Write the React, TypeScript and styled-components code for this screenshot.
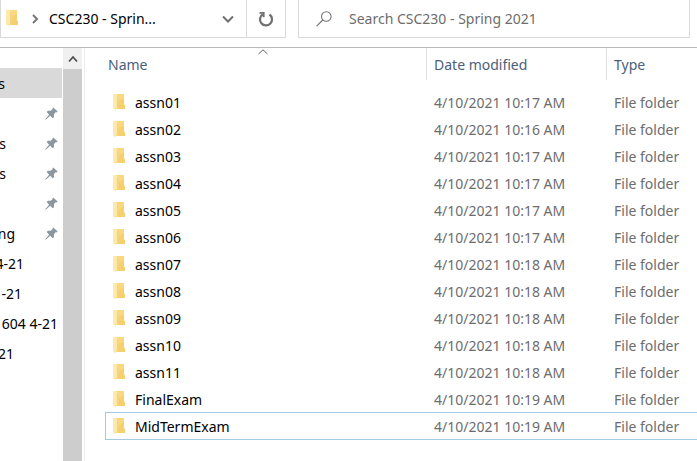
import React from "react";
import styled, { createGlobalStyle } from "styled-components";

const GlobalStyle = createGlobalStyle`
  *, *::before, *::after { box-sizing: border-box; }
  body {
    margin: 0;
    background: #fff;
    color: #000;
    font: 14px/20px "Noto Sans", "Open Sans", sans-serif;
    overflow: hidden;
  }
  button, input {
    font: inherit;
    color: inherit;
    background: none;
    border: 0;
    margin: 0;
    padding: 0;
  }
  svg { display: block; flex: none; }
`;

const Window = styled.div`
  display: flex;
  flex-direction: column;
  height: 100vh;
`;

const Toolbar = styled.header`
  display: flex;
  flex: none;
  gap: 12px;
  height: 48px;
  padding: 0 7px 9px 0;
  border-bottom: 1px solid #b9b9b9;
`;

const AddressBar = styled.nav`
  display: flex;
  flex: none;
  width: 286px;
  border: solid #d9d9d9;
  border-width: 0 1px 1px;
`;

const Path = styled.div`
  display: flex;
  align-items: center;
  flex: 1;
  padding-left: 5px;
`;

const Crumb = styled.button`
  margin-left: 10px;
  white-space: nowrap;
`;

const Separator = styled.span`
  margin-left: 13px;
`;

const IconButton = styled.button<{ $width: number; $divided?: boolean }>`
  display: flex;
  align-items: center;
  justify-content: center;
  width: ${(p) => p.$width}px;
  border-left: ${(p) => (p.$divided ? "1px solid #d9d9d9" : "0")};
`;

const SearchBox = styled.label`
  display: flex;
  align-items: center;
  flex: 1;
  min-width: 0;
  gap: 17px;
  padding-left: 17px;
  border: solid #d9d9d9;
  border-width: 0 1px 1px;
`;

const SearchInput = styled.input`
  flex: 1;
  min-width: 0;
  outline: 0;
  &::placeholder { color: #6d6d6d; opacity: 1; }
`;

const Body = styled.div`
  display: flex;
  flex: 1;
  min-height: 0;
`;

const Sidebar = styled.aside`
  display: flex;
  flex: none;
  width: 85px;
  border-right: 1px solid #ededed;
`;

const QuickList = styled.ul`
  flex: 1;
  margin: 0;
  padding: 20px 1px 0 0;
  list-style: none;
`;

const QuickItem = styled.li<{ $active?: boolean }>`
  display: flex;
  align-items: center;
  justify-content: space-between;
  height: 30px;
  padding-right: 4px;
  background: ${(p) => (p.$active ? "#d9d9d9" : "transparent")};
`;

const QuickLabel = styled.span<{ $visible: number }>`
  display: flex;
  flex: none;
  justify-content: flex-end;
  width: ${(p) => p.$visible}px;
  padding-top: 2px;
  overflow: hidden;
  white-space: nowrap;
`;

const Scrollbar = styled.div`
  display: flex;
  flex: none;
  flex-direction: column;
  width: 19px;
  margin-right: 3px;
  background: #f0f0f0;
`;

const ScrollUp = styled.button`
  display: flex;
  align-items: center;
  justify-content: center;
  height: 21px;
`;

const Thumb = styled.div`
  flex: 1;
  background: #cdcdcd;
`;

const Main = styled.main`
  flex: 1;
  min-width: 0;
  padding-left: 15px;
`;

const FileTable = styled.table`
  width: 100%;
  table-layout: fixed;
  border-spacing: 0;
`;

const Column = styled.col<{ $width?: number }>`
  width: ${(p) => (p.$width ? `${p.$width}px` : "auto")};
`;

const HeadCell = styled.th`
  padding: 0 0 8px;
  font-weight: 400;
  text-align: left;
`;

const SortButton = styled.button<{ $first?: boolean }>`
  position: relative;
  display: flex;
  align-items: center;
  width: 100%;
  height: 32px;
  padding: 2px 0 0 ${(p) => (p.$first ? 8 : 7)}px;
  border-left: ${(p) => (p.$first ? "0" : "1px solid #e2e2e2")};
  color: #4c607a;
`;

const SortMark = styled.span`
  position: absolute;
  top: 1px;
  left: 50%;
  transform: translateX(-50%);
`;

const Cell = styled.td<{ $first?: boolean }>`
  padding: 0 0 0 ${(p) => (p.$first ? 5 : 0)}px;
`;

const CellContent = styled.div<{ $selected?: boolean; $name?: boolean }>`
  display: flex;
  align-items: center;
  gap: 9px;
  height: ${(p) => (p.$selected ? 28 : 27)}px;
  padding: ${(p) => (p.$selected ? 1 : 2)}px 0 0 ${(p) => (p.$name ? 7 : 8)}px;
  color: ${(p) => (p.$name ? "#000" : "#6d6d6d")};
  border: solid ${(p) => (p.$selected ? "#a3cbe3" : "transparent")};
  border-width: 1px 0 ${(p) => (p.$selected ? 1 : 0)}px ${(p) => (p.$name ? 1 : 0)}px;
  white-space: nowrap;
`;

const FolderIcon = () => (
  <svg width="13" height="20" viewBox="0 0 13 20" aria-hidden="true">
    <path d="M2 1h9v10.5l1 1V16H2z" fill="#f8d97f" />
    <path d="M6 8l5-3v6.5l1 1V16H5z" fill="#f6d06f" />
    <path d="M0 1h3l2 2v11l-2 1v2.5L0 15.5z" fill="#fce9ab" />
    <path d="M4 2.5L5 3.5V14l-1 .5z" fill="#f0d184" />
  </svg>
);

const Pin = () => (
  <svg width="13" height="13" viewBox="0 0 13 13" aria-hidden="true">
    <path
      d="M8.2.4l4.500 4.200-1.400.8-.8-.1-1.600 1.900.1 3-1.300 1-2.500-2.500-4.500 4-.5-.5 3.900-4.500L1.700 5l1.100-1.300 2.900.1 1.900-1.800-.1-.8z"
      fill="#8c969e"
    />
  </svg>
);

type ChevronProps = { width: number; height: number; d: string; color: string; weight: number };

const Chevron = ({ width, height, d, color, weight }: ChevronProps) => (
  <svg width={width} height={height} viewBox={`0 0 ${width} ${height}`} fill="none" aria-hidden="true">
    <path d={d} stroke={color} strokeWidth={weight} />
  </svg>
);

const RefreshIcon = () => (
  <svg width="16" height="16" viewBox="0 0 16 16" fill="none" aria-hidden="true">
    <path d="M11.500 3.500A6 6 0 1 1 4.800 3.300" stroke="#707070" strokeWidth="2.200" />
    <path d="M1.500 1.900H5.700V6.300" stroke="#707070" strokeWidth="1.800" />
  </svg>
);

const SearchIcon = () => (
  <svg width="16" height="16" viewBox="0 0 16 16" fill="none" stroke="#777" aria-hidden="true">
    <circle cx="10.3" cy="5.5" r="4.8" strokeWidth="1.1" />
    <path d="M6.8 9L.6 15.2" strokeWidth="1.2" />
  </svg>
);

const quickAccess = [
  { label: "s", visible: 5, active: true },
  { label: "", visible: 0, pinned: true },
  { label: "s", visible: 6, pinned: true },
  { label: "s", visible: 6, pinned: true },
  { label: "", visible: 0, pinned: true },
  { label: "ng", visible: 15, pinned: true },
  { label: "4-21", visible: 24 },
  { label: "-21", visible: 22 },
  { label: "604 4-21", visible: 58 },
  { label: "21", visible: 14 },
];

const files = [
  ["assn01", "10:17"],
  ["assn02", "10:16"],
  ["assn03", "10:17"],
  ["assn04", "10:17"],
  ["assn05", "10:17"],
  ["assn06", "10:17"],
  ["assn07", "10:18"],
  ["assn08", "10:18"],
  ["assn09", "10:18"],
  ["assn10", "10:18"],
  ["assn11", "10:18"],
  ["FinalExam", "10:19"],
  ["MidTermExam", "10:19"],
];

export default function App() {
  return (
    <Window>
      <GlobalStyle />
      <Toolbar>
        <AddressBar aria-label="Address">
          <Path>
            <FolderIcon />
            <Separator>
              <Chevron width={7} height={10} d="M1 1l4 4-4 4" color="#777" weight={2} />
            </Separator>
            <Crumb type="button">CSC230 - Sprin...</Crumb>
          </Path>
          <IconButton type="button" $width={36} aria-label="Previous locations">
            <Chevron width={12} height={8} d="M1 1.5l5 5 5-5" color="#707070" weight={2} />
          </IconButton>
          <IconButton type="button" $width={39} $divided aria-label="Refresh">
            <RefreshIcon />
          </IconButton>
        </AddressBar>
        <SearchBox>
          <SearchIcon />
          <SearchInput type="text" placeholder="Search CSC230 - Spring 2021" aria-label="Search CSC230 - Spring 2021" />
        </SearchBox>
      </Toolbar>
      <Body>
        <Sidebar>
          <QuickList>
            {quickAccess.map((item, i) => (
              <QuickItem key={i} $active={item.active}>
                <QuickLabel $visible={item.visible}>{item.label}</QuickLabel>
                {item.pinned && <Pin />}
              </QuickItem>
            ))}
          </QuickList>
          <Scrollbar>
            <ScrollUp type="button" aria-label="Scroll up">
              <Chevron width={10} height={8} d="M1 6.5l4-4.5 4 4.5" color="#505050" weight={1.8} />
            </ScrollUp>
            <Thumb />
          </Scrollbar>
        </Sidebar>
        <Main>
          <FileTable>
            <colgroup>
              <Column $width={326} />
              <Column $width={180} />
              <Column />
            </colgroup>
            <thead>
              <tr>
                <HeadCell aria-sort="ascending">
                  <SortButton type="button" $first>
                    Name
                    <SortMark>
                      <Chevron width={10} height={6} d="M.5 5L5 .8 9.500 5" color="#666" weight={1} />
                    </SortMark>
                  </SortButton>
                </HeadCell>
                <HeadCell>
                  <SortButton type="button">Date modified</SortButton>
                </HeadCell>
                <HeadCell>
                  <SortButton type="button">Type</SortButton>
                </HeadCell>
              </tr>
            </thead>
            <tbody>
              {files.map(([name, time]) => {
                const selected = name === "MidTermExam";
                return (
                  <tr key={name}>
                    <Cell $first>
                      <CellContent $name $selected={selected}>
                        <FolderIcon />
                        {name}
                      </CellContent>
                    </Cell>
                    <Cell>
                      <CellContent $selected={selected}>4/10/2021 {time} AM</CellContent>
                    </Cell>
                    <Cell>
                      <CellContent $selected={selected}>File folder</CellContent>
                    </Cell>
                  </tr>
                );
              })}
            </tbody>
          </FileTable>
        </Main>
      </Body>
    </Window>
  );
}
